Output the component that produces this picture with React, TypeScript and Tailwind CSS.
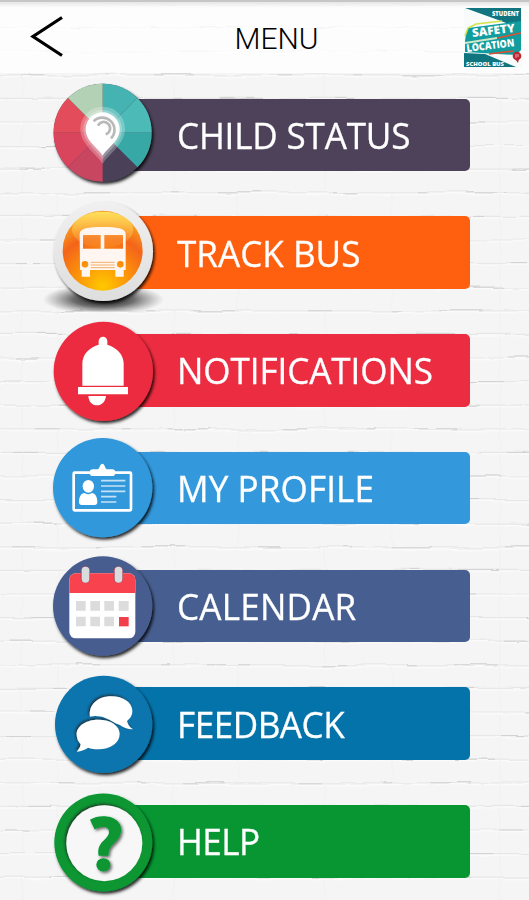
import type { ReactNode } from "react";

type MenuItem = {
  label: string;
  bar: string;
  text: string;
  icon: ReactNode;
};

const shadow = "url(#disc-shadow)";

/* Icons share a 360 x 353 canvas that also leaves room for the shadow */
function IconCanvas({ children }: { children: ReactNode }) {
  return (
    <svg viewBox="0 0 360 353.25" className="relative z-10 h-full w-[120px] shrink-0 overflow-visible">
      {children}
    </svg>
  );
}

function ChildIcon() {
  return (
    <IconCanvas>
      <circle cx="188" cy="173" r="147" fill="#3f3b52" filter={shadow} />
      <path d="M188 173V26A147 147 0 0 1 292 69Z" fill="#45b3b1" />
      <path d="M188 173L292 69A147 147 0 0 1 335 173Z" fill="#4cbab7" />
      <path d="M188 173H335A147 147 0 0 1 292 277Z" fill="#38a8a6" />
      <path d="M188 173L292 277A147 147 0 0 1 188 320Z" fill="#4a4058" />
      <path d="M188 173V320A147 147 0 0 1 84 277Z" fill="#c94661" />
      <path d="M188 173L84 277A147 147 0 0 1 41 173Z" fill="#d9455c" />
      <path d="M188 173H41A147 147 0 0 1 84 69Z" fill="#e34c5a" />
      <path d="M188 173L84 69A147 147 0 0 1 188 26Z" fill="#b3d1b5" />
      <path d="M188 266C170 238 121 207 121 162a67 67 0 0 1 134 0C255 207 206 238 188 266Z" fill="#fff" opacity=".25" />
      <path d="M188 254C172 229 130 203 130 163a58 58 0 0 1 116 0C246 203 204 229 188 254Z" fill="#fff" opacity=".25" />
      <path d="M188 242C174 219 137 199 137 163a51 51 0 0 1 102 0C239 199 202 219 188 242Z" fill="#fff" />
      <path d="M161 139A36 36 0 1 1 213 190M174 152A19 19 0 1 1 197 178" fill="none" stroke="#b9b9b9" strokeWidth="8" />
    </IconCanvas>
  );
}

function BusIcon() {
  return (
    <IconCanvas>
      <g transform="translate(0 7)">
        <ellipse cx="190" cy="312" rx="182" ry="46" fill="url(#floor)" clipPath="url(#floor-edge)" />
        <circle cx="190" cy="168" r="149" fill="url(#rim)" filter={shadow} />
        <circle cx="188" cy="166" r="120" fill="url(#orange)" />
        <ellipse cx="188" cy="103" rx="92" ry="54" fill="url(#gloss)" />
        <path
          fillRule="evenodd"
          fill="#fff6f2"
          d="M119 116C119 99 145 95 188 95s69 4 69 21v108h-6v20h-25v-20h-76v20h-25v-20h-5ZM129 119v41h53v-41ZM193 119v41h56v-41ZM125 207a10 10 0 1 0 20 0a10 10 0 1 0-20 0M231 207a10 10 0 1 0 20 0a10 10 0 1 0-20 0"
        />
        <path d="M152 201h72M152 209h72M152 217h72" stroke="#f4b068" strokeWidth="3" />
      </g>
    </IconCanvas>
  );
}

function BellIcon() {
  return (
    <IconCanvas>
      <g transform="translate(0 13)">
        <circle cx="190" cy="168" r="149" fill="#ec2c40" filter={shadow} />
        <path
          fill="#fff"
          d="M127 211V145c0-27 19-48 49-57V77a13 13 0 0 1 26 0v11c29 9 49 30 49 57v66ZM114 215h150v22H114ZM145 242h53c-2 17-12 28-27 28s-25-11-26-28Z"
        />
      </g>
    </IconCanvas>
  );
}

function ProfileIcon() {
  return (
    <IconCanvas>
      <g transform="translate(0 11)">
        <circle cx="188" cy="168" r="149" fill="#3398dc" filter={shadow} />
        <rect x="101" y="123" width="172" height="113" rx="3" fill="none" stroke="#fff" strokeWidth="8" />
        <path d="M159 113h14c6-2 7-17 14-17s8 15 14 17h15a10 10 0 0 1 0 20h-57a10 10 0 0 1 0-20Z" fill="#fff" />
        <ellipse cx="145" cy="164" rx="17" ry="19" fill="#fff" />
        <path d="M117 212c0-17 6-27 17-28 6 5 15 5 21 0 11 1 17 11 17 28 0 5-3 8-8 8h-39c-5 0-8-3-8-8Z" fill="#fff" />
        <path d="M183 147h73M183 163h73M183 179h73M183 195h46M183 211h46" stroke="#c5e1f5" strokeWidth="5" />
      </g>
    </IconCanvas>
  );
}

function CalendarIcon() {
  return (
    <IconCanvas>
      <g transform="translate(0 12)">
        <circle cx="188" cy="168" r="149" fill="#475d8f" filter={shadow} />
        <rect x="88" y="70" width="198" height="195" rx="19" fill="#fff" />
        <path d="M88 129V89a19 19 0 0 1 19-19h160a19 19 0 0 1 19 19v40Z" fill="#f8434f" />
        <rect x="122" y="49" width="28" height="51" rx="14" fill="#aa4559" />
        <rect x="221" y="49" width="28" height="51" rx="14" fill="#aa4559" />
        <rect x="125" y="50" width="23" height="48" rx="11" fill="#dadbdd" />
        <rect x="224" y="50" width="23" height="48" rx="11" fill="#dadbdd" />
        <path d="M108 153h29v29h-29ZM151 153h29v29h-29ZM193 153h29v29h-29ZM236 153h30v29h-30ZM108 200h29v29h-29ZM151 200h29v29h-29ZM193 200h29v29h-29Z" fill="#dcdcdc" />
        <path d="M237 201h29v28h-29Z" fill="#f33e4b" />
      </g>
    </IconCanvas>
  );
}

function FeedbackIcon() {
  return (
    <IconCanvas>
      <g transform="translate(0 13)">
        <circle cx="191" cy="168" r="146" fill="#0875ae" filter={shadow} />
        <g filter="url(#cutout)" fill="#fff">
          <path d="M150 145C145 109 174 84 213 84c37 0 64 19 64 44 0 14-7 23-16 30 2 10 7 17 18 25-18-1-29-5-39-13-14-4-25-13-42-20-14-7-34-9-48-5Z" />
          <path d="M175 154c37 0 64 18 64 43 0 27-28 46-64 46-11 0-22-2-31-5-9 7-19 10-34 12 8-9 11-14 12-22-8-8-12-18-12-30 0-26 30-44 65-44Z" />
        </g>
      </g>
    </IconCanvas>
  );
}

function HelpIcon() {
  return (
    <IconCanvas>
      <g transform="translate(0 10.5)">
        <circle cx="190" cy="171" r="147" fill="#079632" filter={shadow} />
        <circle cx="193" cy="173" r="114" fill="#f7f7f8" filter="url(#cutout)" />
        <g filter="url(#mark-shadow)" fill="#079632">
          <path d="M150 103C165 94 182 91 200 93c30 3 46 22 43 45-4 32-35 38-37 61l-1 12h-29c-3-17 0-31 12-43 11-11 20-19 19-31-2-15-22-18-43-5Z" />
          <ellipse cx="190" cy="238" rx="21" ry="20" />
        </g>
      </g>
    </IconCanvas>
  );
}

const items: MenuItem[] = [
  { label: "CHILD STATUS", bar: "bg-[#4d4259]", text: "tracking-[-0.2px]", icon: <ChildIcon /> },
  { label: "TRACK BUS", bar: "bg-[#ff6010]", text: "tracking-[0px]", icon: <BusIcon /> },
  { label: "NOTIFICATIONS", bar: "bg-[#ec2c40]", text: "tracking-[-0.1px]", icon: <BellIcon /> },
  { label: "MY PROFILE", bar: "bg-[#3398dc]", text: "tracking-[0.1px]", icon: <ProfileIcon /> },
  { label: "CALENDAR", bar: "bg-[#475f90]", text: "tracking-[0.2px]", icon: <CalendarIcon /> },
  { label: "FEEDBACK", bar: "bg-[#0473aa]", text: "tracking-[-0.5px]", icon: <FeedbackIcon /> },
  { label: "HELP", bar: "bg-[#079632]", text: "tracking-[-0.6px]", icon: <HelpIcon /> },
];

/** Gradients and filters used by the icons */
function Defs() {
  return (
    <svg className="absolute size-0">
      <defs>
        <filter id="disc-shadow" x="-20%" y="-20%" width="140%" height="140%">
          <feDropShadow dx="5" dy="7" stdDeviation="5" floodColor="#000" floodOpacity=".85" />
        </filter>
        <filter id="mark-shadow" x="-20%" y="-20%" width="150%" height="140%">
          <feDropShadow dx="5" dy="5" stdDeviation="4" floodColor="#000" floodOpacity=".6" />
        </filter>
        <filter id="cutout" x="-20%" y="-20%" width="140%" height="140%">
          <feDropShadow dx="-4" dy="-4" stdDeviation="3" floodColor="#222" floodOpacity=".8" />
        </filter>
        <clipPath id="floor-edge">
          <rect x="0" y="200" width="380" height="149" />
        </clipPath>
        <linearGradient id="rim" x1="0" y1="0" x2="0" y2="1">
          <stop offset="0" stopColor="#f0f0f0" />
          <stop offset="1" stopColor="#dedede" />
        </linearGradient>
        <radialGradient id="orange" cx=".5" cy=".95" r=".85">
          <stop offset="0" stopColor="#ffc800" />
          <stop offset=".45" stopColor="#fb8d0c" />
          <stop offset=".75" stopColor="#f4641a" />
          <stop offset="1" stopColor="#f79b20" />
        </radialGradient>
        <linearGradient id="gloss" x1="0" y1="0" x2="0" y2="1">
          <stop offset="0" stopColor="#ffe25e" />
          <stop offset="1" stopColor="#ffb04a" stopOpacity=".15" />
        </linearGradient>
        <radialGradient id="floor">
          <stop offset="0" stopColor="#000" stopOpacity=".95" />
          <stop offset=".5" stopColor="#222" stopOpacity=".65" />
          <stop offset="1" stopColor="#555" stopOpacity="0" />
        </radialGradient>
      </defs>
    </svg>
  );
}

const courses = Array.from({ length: 38 }, (_, i) => 4 + i * 23.6);

/** Whitewashed brick wall */
function Wall() {
  return (
    <svg viewBox="0 0 529 900" className="absolute inset-0 size-full">
      <defs>
        <filter id="rough" x="0" y="0" width="100%" height="100%" filterUnits="userSpaceOnUse">
          <feTurbulence type="fractalNoise" baseFrequency=".02 .05" numOctaves="3" seed="4" />
          <feDisplacementMap in="SourceGraphic" scale="6" xChannelSelector="R" yChannelSelector="G" />
          <feGaussianBlur stdDeviation=".6" />
        </filter>
      </defs>
      <rect width="529" height="900" fill="#f5f5f5" />
      <g filter="url(#rough)" fill="none">
        {courses.map((y, i) => (
          <g key={y}>
            <path d={`M-10 ${y}H540`} stroke="#e7e7e7" strokeWidth="1.2" />
            <path d={`M-10 ${y + 1.6}H540`} stroke="#fafafa" strokeWidth="1.5" />
            <path d={`M${(i * 67) % 90} ${y}H540`} stroke="#cecece" strokeWidth=".9" strokeDasharray="24 61 9 38 42 73" />
            <path
              d={`M${i % 2 ? 22 : 58} ${y}v23M${i % 2 ? 174 : 238} ${y}v23M${i % 2 ? 325 : 392} ${y}v23M500 ${y}v23`}
              stroke="#f1f1f1"
            />
          </g>
        ))}
      </g>
    </svg>
  );
}

function Logo() {
  return (
    <svg viewBox="0 0 58 61" className="h-[61px] w-[58px] overflow-visible" fontFamily="Open Sans, sans-serif" fontWeight="800">
      <rect width="58" height="61" fill="#f7fbfb" />
      <path d="M1 1H57V22L37 14Z" fill="#10757f" />
      <path d="M0 46L21 47 52 60H0Z" fill="#10757f" />
      <path d="M4 21L57 14V43L52 48 1 45V34L2 27Z" fill="#119c9e" />
      <path d="M1 29L4 21 12 17 38 14" fill="none" stroke="#d4e34a" strokeWidth="1.6" />
      <path d="M1 36L33 31" stroke="#cfe8c8" strokeWidth="1.8" />
      <path d="M33 31L57 26M25 47L50 44" stroke="#d3543a" strokeWidth="1.7" />
      <text x="28" y="8.5" fontSize="6" fill="#fff" textLength="27" lengthAdjust="spacingAndGlyphs">STUDENT</text>
      <text x="8.5" y="30" fontSize="11.5" fill="#fff" textLength="43" lengthAdjust="spacingAndGlyphs" transform="rotate(-7 8.5 30)">SAFETY</text>
      <text x="3" y="45" fontSize="10.5" fill="#fff" textLength="48" lengthAdjust="spacingAndGlyphs" transform="rotate(-7 3 45)">LOCATION</text>
      <text x="2" y="58.5" fontSize="5.5" fill="#fff" textLength="38" lengthAdjust="spacingAndGlyphs">SCHOOL BUS</text>
      <circle cx="53" cy="49" r="4.3" fill="#bd2734" />
      <path d="M51 52L54 56 55 52Z" fill="#bd2734" />
      <path d="M52 47v4M54 47v3" stroke="#f3c9cc" strokeWidth=".8" />
    </svg>
  );
}

export default function App() {
  return (
    <div className="relative flex h-[900px] w-[529px] flex-col overflow-hidden">
      <Defs />
      <Wall />

      <header className="relative h-[75px] shrink-0">
        <div className="flex h-[73px] items-start justify-between border-t-2 border-[#c6c6c6] bg-white/80 bg-linear-to-b from-[#e6e6e6] via-transparent via-8% to-transparent pl-[30px] pr-[7px]">
          <svg viewBox="0 0 33 42" className="mt-[14px] h-[42px] w-[33px]">
            <path d="M32 1.5L3 20.5 32 39.5" fill="none" stroke="#000" strokeWidth="3.2" />
          </svg>
          <h1 className="ml-[26px] mt-[15px] font-['Roboto'] text-[30px] leading-[44px] font-light text-black">MENU</h1>
          <div className="mt-[5px]">
            <Logo />
          </div>
        </div>
      </header>

      <nav className="relative flex flex-col pl-[40px]">
        {items.map((item) => (
          <a key={item.label} className="flex h-[117.75px] items-start">
            {item.icon}
            <div className={`mt-[23.5px] ml-[-40px] flex h-[72.5px] w-[350px] items-center rounded-[5px] pt-[2px] pl-[57px] ${item.bar}`}>
              <span
                className={`origin-left scale-x-[0.975] font-['Open_Sans'] text-[36px] leading-none whitespace-nowrap text-white [-webkit-text-stroke:0.3px_white] ${item.text}`}
              >
                {item.label}
              </span>
            </div>
          </a>
        ))}
      </nav>
    </div>
  );
}
